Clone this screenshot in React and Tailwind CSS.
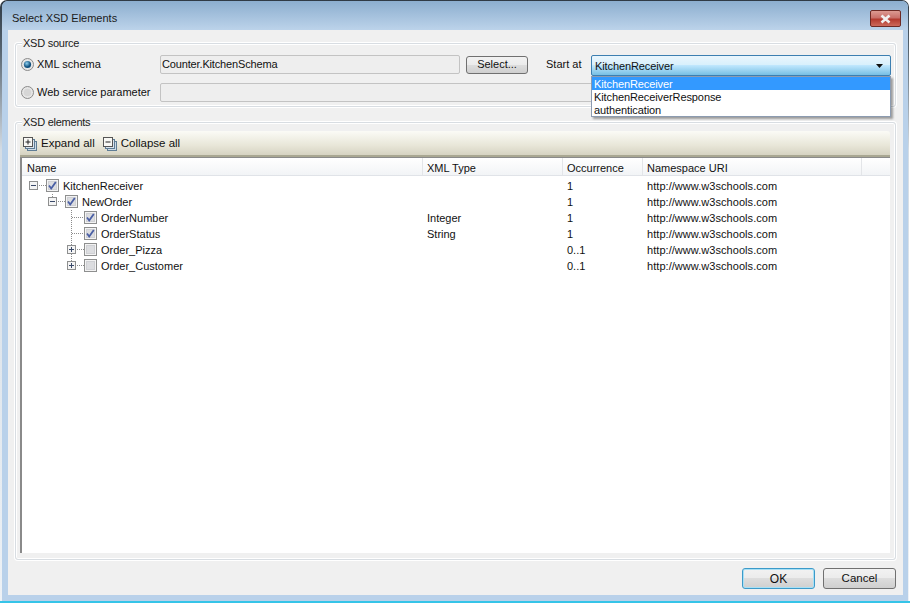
import React from "react";

const Exp = ({ x, minus }) => (
  <g>
    <rect x={x + 0.5} y="3.5" width="8" height="8" fill="#f4f4f4" stroke="#8e8f8f" />
    <path d={`M${x + 2} 7.5h5`} stroke="#3a4a6a" />
    {!minus && <path d={`M${x + 4.5} 5v5`} stroke="#3a4a6a" />}
  </g>
);

const Box = ({ x, checked }) => (
  <g>
    <rect x={x + 0.5} y="1.5" width="12" height="12" fill="#f3f3f3" stroke="#8e8f8f" />
    <rect x={x + 2.5} y="3.5" width="8" height="8" fill="#dcdde0" stroke="#cfd0d4" />
    {checked && <path d={`M${x + 3} 7.5l2.2 3l4.6-6.6`} fill="none" stroke="#4a5fa5" strokeWidth="1.8" />}
  </g>
);

const dots = "#8c8c8c";
const rows = [
  { name: "KitchenReceiver", type: "", occ: "1", lvl: 0 },
  { name: "NewOrder", type: "", occ: "1", lvl: 1 },
  { name: "OrderNumber", type: "Integer", occ: "1", lvl: 2 },
  { name: "OrderStatus", type: "String", occ: "1", lvl: 2 },
  { name: "Order_Pizza", type: "", occ: "0..1", lvl: 2 },
  { name: "Order_Customer", type: "", occ: "0..1", lvl: 2 },
];

function Glyph({ i }) {
  return (
    <svg width="76" height="16" className="shrink-0 block">
      {i === 0 && (
        <g>
          <path d="M17 7.5h7" stroke={dots} strokeDasharray="1 1" />
          <Exp x={7} minus />
          <Box x={24} checked />
        </g>
      )}
      {i === 1 && (
        <g>
          <path d="M30.5 0v3M36 7.5h7" stroke={dots} strokeDasharray="1 1" />
          <Exp x={26} minus />
          <Box x={43} checked />
        </g>
      )}
      {(i === 2 || i === 3) && (
        <g>
          <path d="M49.5 0v16M50 7.5h12" stroke={dots} strokeDasharray="1 1" />
          <Box x={62} checked />
        </g>
      )}
      {i === 4 && (
        <g>
          <path d="M49.5 0v3M49.5 12v4M55 7.5h7" stroke={dots} strokeDasharray="1 1" />
          <Exp x={45} />
          <Box x={62} />
        </g>
      )}
      {i === 5 && (
        <g>
          <path d="M49.5 0v3M55 7.5h7" stroke={dots} strokeDasharray="1 1" />
          <Exp x={45} />
          <Box x={62} />
        </g>
      )}
    </svg>
  );
}

const btn =
  "border rounded-[3px] bg-[linear-gradient(#f2f2f2_0%,#ebebeb_50%,#dddddd_50%,#cfcfcf_100%)] flex items-center justify-center text-[#111]";

const Fieldset = ({ title, className, children }) => (
  <div className={`relative border border-[#d8dde2] rounded-[3px] shadow-[inset_0_0_0_1px_#fff,0_0_0_1px_#fff] ${className}`}>
    <span className="absolute left-[6px] top-[-8px] px-[1px] bg-[#f0f0f0] leading-[14px] text-[#1a1a1a] tracking-[-0.25px]">{title}</span>
    {children}
  </div>
);

const Radio = ({ on }) => (
  <svg width="13" height="13" className="shrink-0 block">
    <defs>
      <radialGradient id="rg" cx="40%" cy="35%">
        <stop offset="0%" stopColor="#8fd0ef" />
        <stop offset="100%" stopColor="#0f4f7d" />
      </radialGradient>
    </defs>
    <circle cx="6.5" cy="6.5" r="6" fill="#e6e6e6" stroke="#8a8a8a" />
    {on ? <circle cx="6.5" cy="6.5" r="3.6" fill="url(#rg)" /> : <circle cx="6.5" cy="6.5" r="3.8" fill="#d6d6d6" />}
  </svg>
);

const ToolIcon = ({ minus }) => (
  <svg width="14" height="14" className="block shrink-0">
    <rect x="4.5" y="4.5" width="9" height="9" fill="#cfdbe6" stroke="#5f7d95" />
    <rect x="2.5" y="2.5" width="9" height="9" fill="#dbe5ee" stroke="#5f7d95" />
    <rect x="0.5" y="0.5" width="9" height="9" fill="#f8f8f4" stroke="#555" />
    <path d="M2.5 5h5" stroke="#222" />
    {!minus && <path d="M5 2.5v5" stroke="#222" />}
  </svg>
);

const colW = ["w-[401px]", "w-[140px]", "w-[80px]", "w-[219px]"];

export default function App() {
  return (
    <div className="w-[910px] h-[603px] overflow-hidden bg-white flex flex-col text-[11px] text-[#111] font-['Liberation_Sans',sans-serif]">
      <div className="w-[909px] h-[601px] shrink-0 pt-[1px] pl-[2px] pr-[1px] rounded-t-[7px] bg-[linear-gradient(#2f3a45_0%,#55636f_8%,#d5dde5_25%,#eef2f6_100%)]">
        <div className="h-full flex flex-col rounded-t-[6px] bg-[#b9d1ea]">
          <div className="h-[29px] shrink-0 flex items-start justify-between pt-[9px] pl-[10px] pr-[7px] rounded-t-[6px] bg-[linear-gradient(#8caecf,#bcd3ea)]">
            <span className="leading-[17px] text-[#1a1a1a]">Select XSD Elements</span>
            <div className="w-[31px] h-[17px] rounded-[2px] border border-[#6d2a25] bg-[linear-gradient(#dc9a92_0%,#c9706a_45%,#b33a2f_55%,#cc6a5c_100%)] flex items-center justify-center">
              <svg width="13" height="10"><path d="M2.5 1.5l8 7M10.5 1.5l-8 7" stroke="#f0f0f0" strokeWidth="2.6" /></svg>
            </div>
          </div>
          <div className="flex-1 ml-[6px] mr-[5px] flex flex-col bg-[#f0f0f0] px-[7px] pt-[13px] min-h-0">
            <Fieldset title="XSD source" className="h-[64px] shrink-0">
              <div className="flex items-center h-[19px] mt-[11px] pl-[5px]">
                <Radio on />
                <span className="ml-[3px] w-[123px]">XML schema</span>
                <div className="w-[300px] h-[19px] border border-[#c3c3c3] rounded-[2px] bg-[#eeeeee] flex items-center pl-[1px] tracking-[-0.15px]">Counter.KitchenSchema</div>
                <div className={`${btn} border-[#707070] w-[62px] h-[18px] ml-[6px]`}>Select...</div>
                <span className="ml-[18px] w-[45px] whitespace-nowrap">Start at</span>
                <div className="relative w-[300px] h-[19px]">
                  <div className="h-[21px] border border-[#3c7fb1] rounded-[2px] bg-[linear-gradient(#eaf6fd_0%,#d9f0fc_45%,#bee6fd_50%,#77bfe4_100%)] flex items-center justify-between pt-[1px] pl-[3px] pr-[7px] tracking-[-0.1px]">
                    <span>KitchenReceiver</span>
                    <svg width="7" height="4"><path d="M0 0h7L3.5 4z" fill="#111" /></svg>
                  </div>
                  <div className="absolute z-10 left-0 top-[21px] w-[300px] h-[41px] bg-white border border-[#8c9bb0] shadow-[2px_2px_2px_rgba(0,0,0,0.35)] leading-[14px] tracking-[-0.1px]">
                    <div className="h-[13px] bg-[#3399ff] text-white pl-[2px]">KitchenReceiver</div>
                    <div className="h-[13px] pl-[2px]">KitchenReceiverResponse</div>
                    <div className="h-[13px] pl-[2px]">authentication</div>
                  </div>
                </div>
              </div>
              <div className="flex items-center h-[19px] mt-[9px] pl-[5px]">
                <Radio />
                <span className="ml-[3px] w-[123px] whitespace-nowrap">Web service parameter</span>
                <div className="w-[731px] h-[19px] border border-[#c3c3c3] rounded-[2px] bg-[#eeeeee]" />
              </div>
            </Fieldset>
            <Fieldset title="XSD elements" className="mt-[15px] h-[438px] shrink-0 pl-[4px] pr-[5px] pt-[8px]">
              <div className="h-[26px] flex items-center pl-[3px] pt-[1px] rounded-t-[3px] text-[11.5px] bg-[linear-gradient(#fbfbf6,#e8e6d8_60%,#d6d3c2)] border-b-2 border-b-[#a9a792]">
                <ToolIcon />
                <span className="ml-[4px]">Expand all</span>
                <span className="ml-[8px]"><ToolIcon minus /></span>
                <span className="ml-[4px]">Collapse all</span>
              </div>
              <div className="h-[396px] bg-white border-l-2 border-l-[#8a8a8a] border-t border-t-[#8a8a8a] overflow-hidden">
                <div className="flex h-[18px] bg-[linear-gradient(#ffffff,#f2f4f6)] border-b border-b-[#e0e3e8]">
                  {["Name", "XML Type", "Occurrence", "Namespace URI"].map((h, i) => (
                    <div key={h} className={`${colW[i]} shrink-0 ${i === 0 ? "pl-[5px]" : "pl-[4px]"} border-r border-r-[#e3e5e8] leading-[20px]`}>{h}</div>
                  ))}
                </div>
                <div className="pt-[2px]">
                  {rows.map((r, i) => (
                    <div key={r.name} className="flex h-[16px] leading-[16px]">
                      <div className={`${colW[0]} flex`}>
                        <div style={{ width: 41 + r.lvl * 19 }} className="shrink-0 overflow-visible">
                          <Glyph i={i} />
                        </div>
                        <span>{r.name}</span>
                      </div>
                      <div className={`${colW[1]} pl-[4px]`}>{r.type}</div>
                      <div className={`${colW[2]} pl-[4px]`}>{r.occ}</div>
                      <div className={`${colW[3]} pl-[4px] tracking-[0.05px]`}>http://www.w3schools.com</div>
                    </div>
                  ))}
                </div>
              </div>
            </Fieldset>
            <div className="flex justify-end gap-[8px] mt-[8px]">
              <div className={`${btn} border-[#3c9ac9] w-[73px] h-[21px] shadow-[inset_0_0_0_1px_#a8e0f5] text-[12px]`}>OK</div>
              <div className={`${btn} border-[#707070] w-[73px] h-[21px] text-[11.5px]`}>Cancel</div>
            </div>
          </div>
          <div className="h-[6px] shrink-0" />
        </div>
      </div>
      <div className="h-[2px] shrink-0 bg-[#35c4e8]" />
    </div>
  );
}
